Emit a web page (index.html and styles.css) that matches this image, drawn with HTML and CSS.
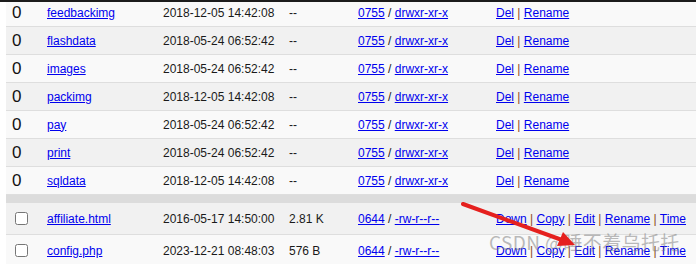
FILE: index.html
```html
<!DOCTYPE html>
<html>
<head>
<meta charset="utf-8">
<link rel="stylesheet" href="styles.css">
</head>
<body>
<div class="topbar"></div>
<div class="list">
  <div class="row light"><span class="c1 big">0</span><span><a href="#">feedbackimg</a></span><span>2018-12-05 14:42:08</span><span>--</span><span><a href="#">0755</a> / <a href="#">drwxr-xr-x</a></span><span><a href="#">Del</a> <i>|</i> <a href="#">Rename</a></span></div>
  <div class="row dark"><span class="c1 big">0</span><span><a href="#">flashdata</a></span><span>2018-05-24 06:52:42</span><span>--</span><span><a href="#">0755</a> / <a href="#">drwxr-xr-x</a></span><span><a href="#">Del</a> <i>|</i> <a href="#">Rename</a></span></div>
  <div class="row light"><span class="c1 big">0</span><span><a href="#">images</a></span><span>2018-05-24 06:52:42</span><span>--</span><span><a href="#">0755</a> / <a href="#">drwxr-xr-x</a></span><span><a href="#">Del</a> <i>|</i> <a href="#">Rename</a></span></div>
  <div class="row dark"><span class="c1 big">0</span><span><a href="#">packimg</a></span><span>2018-12-05 14:42:08</span><span>--</span><span><a href="#">0755</a> / <a href="#">drwxr-xr-x</a></span><span><a href="#">Del</a> <i>|</i> <a href="#">Rename</a></span></div>
  <div class="row light"><span class="c1 big">0</span><span><a href="#">pay</a></span><span>2018-05-24 06:52:42</span><span>--</span><span><a href="#">0755</a> / <a href="#">drwxr-xr-x</a></span><span><a href="#">Del</a> <i>|</i> <a href="#">Rename</a></span></div>
  <div class="row dark"><span class="c1 big">0</span><span><a href="#">print</a></span><span>2018-05-24 06:52:42</span><span>--</span><span><a href="#">0755</a> / <a href="#">drwxr-xr-x</a></span><span><a href="#">Del</a> <i>|</i> <a href="#">Rename</a></span></div>
  <div class="row light"><span class="c1 big">0</span><span><a href="#">sqldata</a></span><span>2018-12-05 14:42:08</span><span>--</span><span><a href="#">0755</a> / <a href="#">drwxr-xr-x</a></span><span><a href="#">Del</a> <i>|</i> <a href="#">Rename</a></span></div>
  <div class="band"></div>
  <div class="row dark tall"><span class="c1"><input type="checkbox"></span><span><a href="#">affiliate.html</a></span><span>2016-05-17 14:50:00</span><span>2.81 K</span><span><a href="#">0644</a> / <a href="#">-rw-r--r--</a></span><span><a href="#">Down</a> <i>|</i> <a href="#">Copy</a> <i>|</i> <a href="#">Edit</a> <i>|</i> <a href="#">Rename</a> <i>|</i> <a href="#">Time</a></span></div>
  <div class="row light tall"><span class="c1"><input type="checkbox"></span><span><a href="#">config.php</a></span><span>2023-12-21 08:48:03</span><span>576 B</span><span><a href="#">0644</a> / <a href="#">-rw-r--r--</a></span><span><a href="#">Down</a> <i>|</i> <a href="#">Copy</a> <i>|</i> <a href="#">Edit</a> <i>|</i> <a href="#">Rename</a> <i>|</i> <a href="#">Time</a></span></div>
</div>
<div class="watermark">CSDN @睡不着乌托托</div>
<svg class="arrow" width="696" height="264" viewBox="0 0 696 264">
  <line x1="463" y1="204" x2="562" y2="240" stroke="#e5201e" stroke-width="4" stroke-linecap="round"/>
  <polygon points="575,245 557,246 563,232" fill="#e5201e"/>
</svg>
</body>
</html>
```
FILE: styles.css
```css
html, body {
  margin: 0;
  padding: 0;
  background: #ffffff;
  overflow: hidden;
}
body {
  width: 696px;
  height: 264px;
  font-family: "Liberation Sans", Arial, sans-serif;
  font-size: 12px;
  color: #1a1a1a;
  position: relative;
}
.topbar {
  height: 2px;
  background: #1c1c1c;
  position: relative;
  z-index: 2;
}
.list {
  margin-top: -3px;
  margin-left: 6px;
}
.row {
  display: grid;
  grid-template-columns: 35px 116px 126px 69px 138px 1fr;
  align-items: center;
  height: 27px;
  padding-left: 6px;
  border-bottom: 1px solid #dedede;
  white-space: nowrap;
}
.row.tall {
  height: 31px;
}
.light { background: #f9f9f9; }
.dark { background: #f1f1f1; }
.band {
  height: 8px;
  background: #dcdcdc;
}
.big {
  font-size: 17px;
  color: #111;
}
.c1 input {
  margin: 0 0 0 3px;
  width: 13px;
  height: 13px;
  display: block;
}
a {
  color: #0000ee;
  text-decoration: underline;
}
i {
  font-style: normal;
  color: #8b4a1c;
}
.watermark {
  position: absolute;
  left: 489px;
  top: 228px;
  font-family: "Noto Sans CJK SC", sans-serif;
  font-size: 19px;
  color: rgba(120, 120, 120, 0.5);
  letter-spacing: 0.4px;
  white-space: nowrap;
}
.arrow {
  position: absolute;
  left: 0;
  top: 0;
}
```
